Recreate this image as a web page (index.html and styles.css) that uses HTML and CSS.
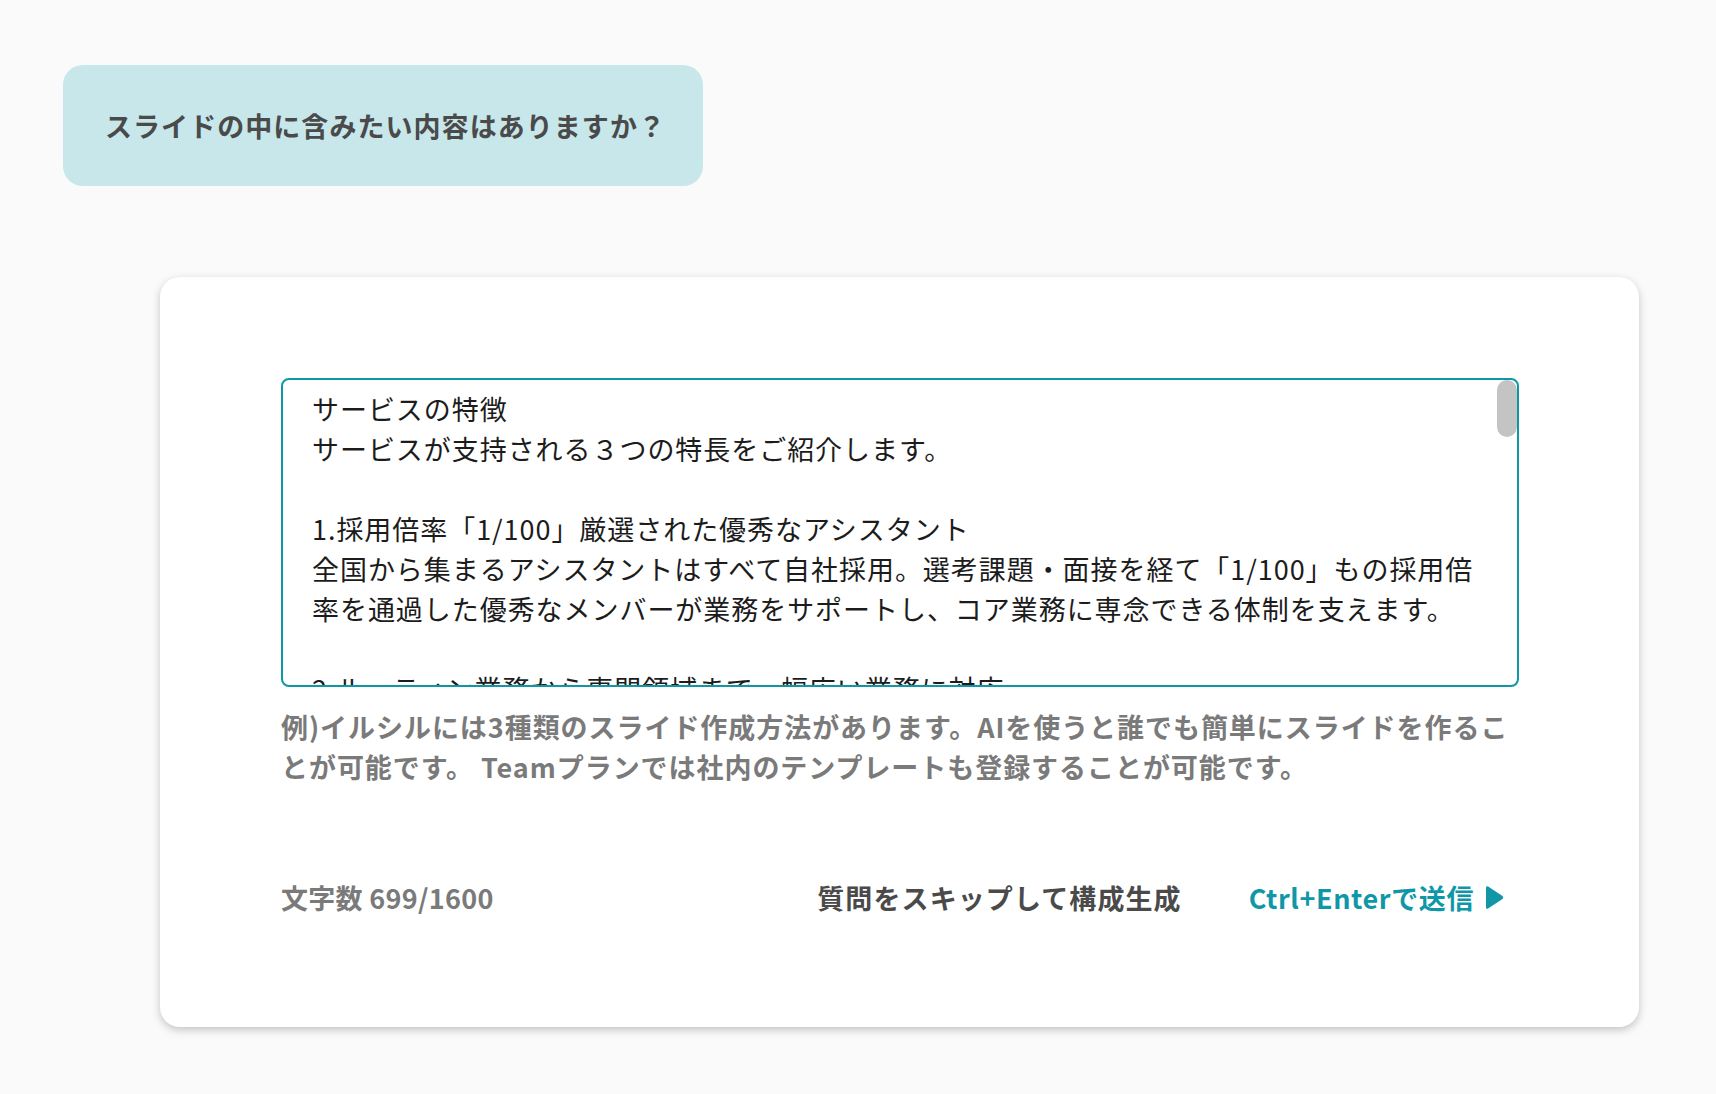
FILE: index.html
```html
<!DOCTYPE html>
<html lang="ja">
<head>
<meta charset="utf-8">
<title>スライド作成</title>
<link rel="stylesheet" href="styles.css">
</head>
<body>
<div class="page">
  <div class="bubble">スライドの中に含みたい内容はありますか？</div>
  <div class="card">
    <div class="field">
      <textarea class="input" spellcheck="false">サービスの特徴
サービスが支持される３つの特長をご紹介します。

1.採用倍率「1/100」厳選された優秀なアシスタント
全国から集まるアシスタントはすべて自社採用。選考課題・面接を経て「1/100」もの採用倍率を通過した優秀なメンバーが業務をサポートし、コア業務に専念できる体制を支えます。

2.ルーティン業務から専門領域まで、幅広い業務に対応
経理・人事・総務などのバックオフィス業務から、Webサイト運用、デザイン、翻訳といった専門性の高い業務まで、チームでまとめてお任せいただけます。

3.チーム体制で安心の継続サポート
専任のディレクターが窓口となり、複数のアシスタントがチームで対応。急な退職や欠員の心配がなく、品質を保ったまま長期的に業務をお任せいただけます。

導入企業の声
「採用コストをかけずに、必要なときに必要な分だけ優秀な人材に業務を依頼できるようになりました。」
「専門的な業務も任せられるので、社員がコア業務に集中できる環境が整いました。」</textarea>
      <div class="thumb"></div>
    </div>
    <p class="hint">例)イルシルには3種類のスライド作成方法があります。AIを使うと誰でも簡単にスライドを作るこ<br>とが可能です。 Teamプランでは社内のテンプレートも登録することが可能です。</p>
    <div class="actions">
      <span class="count">文字数 699/1600</span>
      <button class="skip" type="button">質問をスキップして構成生成</button>
      <button class="send" type="button">Ctrl+Enterで送信<svg class="arrow" width="19" height="25" viewBox="0 0 19 25"><path d="M1 2.7 Q1 0.4 3.1 1.6 L17.5 10.9 Q19 12.5 17.5 14.1 L3.1 23.4 Q1 24.6 1 22.3 Z" fill="currentColor"/></svg></button>
    </div>
  </div>
</div>
</body>
</html>
```
FILE: styles.css
```css
* { box-sizing: border-box; }
html, body {
  margin: 0;
  padding: 0;
  background: #fafafa;
}
body {
  font-family: "Noto Sans CJK JP", "Noto Sans", sans-serif;
  width: 1716px;
  height: 1094px;
  overflow: hidden;
}
.page {
  padding: 65px 0 0 63px;
}
.bubble {
  width: 640px;
  height: 121px;
  background: #c7e7eb;
  border-radius: 20px;
  display: flex;
  align-items: center;
  padding-left: 42px;
  font-size: 27px;
  font-weight: 700;
  letter-spacing: 1.05px;
  color: #4a4a4a;
}
.card {
  margin: 91px 0 0 97px;
  width: 1479px;
  height: 750px;
  background: #fff;
  border-radius: 20px;
  box-shadow: 0 3px 8px rgba(0, 0, 0, 0.22);
  padding: 101px 120px 0 121px;
}
.field {
  position: relative;
  height: 309px;
}
.input {
  display: block;
  width: 100%;
  height: 100%;
  border: 2px solid #0f97a8;
  border-radius: 8px;
  padding: 9px 32px 0 29px;
  font-family: "Noto Sans CJK JP", "Noto Sans", sans-serif;
  font-size: 27px;
  line-height: 40px;
  letter-spacing: 0.95px;
  color: #1c1c1c;
  resize: none;
  outline: none;
  overflow: hidden;
  background: #fff;
}
.thumb {
  position: absolute;
  top: 2px;
  right: 2px;
  width: 20px;
  height: 57px;
  border-radius: 10px;
  background: #c4c4c4;
}
.hint {
  margin: 20px 0 0;
  font-size: 27px;
  line-height: 40px;
  font-weight: 700;
  letter-spacing: 0.95px;
  color: #7a7a7a;
}
.actions {
  display: flex;
  align-items: center;
  margin-top: 90px;
  height: 40px;
  padding-right: 15px;
  font-size: 27px;
  font-weight: 700;
  letter-spacing: 0.9px;
}
.count {
  color: #7a7a7a;
  letter-spacing: 0.3px;
}
.skip, .send {
  font: inherit;
  letter-spacing: inherit;
  border: none;
  background: none;
  padding: 0;
  cursor: pointer;
}
.skip {
  margin-left: auto;
  color: #4a4a4a;
  letter-spacing: 1.1px;
}
.send {
  margin-left: 67px;
  color: #0f97a8;
  letter-spacing: 0.6px;
  display: flex;
  align-items: center;
  gap: 11px;
}
.arrow {
  display: block;
}
```
